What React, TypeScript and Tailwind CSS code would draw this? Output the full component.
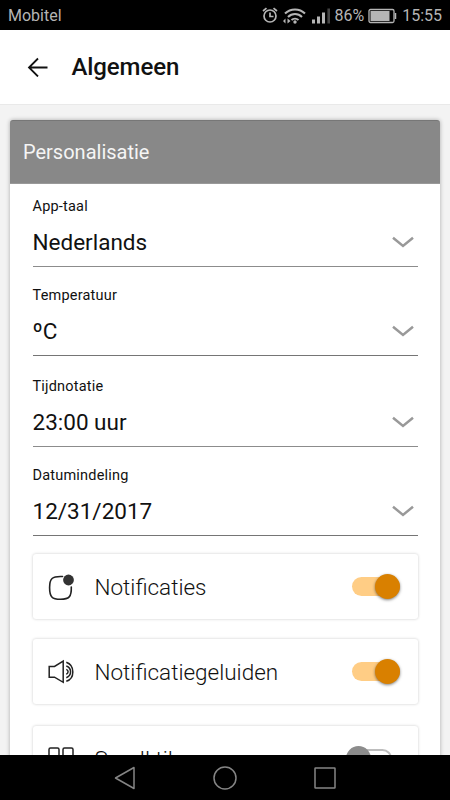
import React, { useState } from 'react';

interface Field {
  label: string;
  value: string;
  size: string;
}

const fields: Field[] = [
  { label: 'App-taal', value: 'Nederlands', size: 'h-[83px] border-[#8c8c8c]' },
  { label: 'Temperatuur', value: 'ºC', size: 'h-[89px] border-[#757575]' },
  { label: 'Tijdnotatie', value: '23:00 uur', size: 'h-[91px] border-[#8c8c8c]' },
  { label: 'Datumindeling', value: '12/31/2017', size: 'h-[89px] border-[#757575]' },
];

const NotificationIcon = () => (
  <svg width="28" height="28" viewBox="0 0 28 28" fill="none">
    <path d="M15.500 3.500C5 3 2.600 5.600 2.600 14.500C2.600 24 5 26.300 13.500 26.300C22 26.300 24.600 24 24.300 14" stroke="#222" strokeWidth="1.600" strokeLinecap="round" />
    <circle cx="21.500" cy="7" r="5.400" fill="#333" />
  </svg>
);

const SoundIcon = () => (
  <svg width="28" height="28" viewBox="0 0 28 28" fill="none" stroke="#222" strokeWidth="1.500">
    <path d="M2.200 8.500H7.500L16.200 3.200V24.300L7.500 19.200H2.200Z" />
    <path d="M19.300 4.300C28 7.500 28 20.500 19.300 23.300" />
    <path d="M19.300 8C25 10 25 17.700 19.300 19.700" />
    <path d="M19.300 11.400C21.700 12.400 21.700 15.200 19.300 16.200" />
  </svg>
);

const TilesIcon = () => (
  <svg width="28" height="28" viewBox="0 0 28 28" fill="none" stroke="#222" strokeWidth="1.500">
    <rect x="2" y="3" width="10" height="10" rx="1.500" />
    <rect x="16" y="3" width="10" height="10" rx="1.500" />
    <rect x="2" y="17" width="10" height="10" rx="1.500" />
    <rect x="16" y="17" width="10" height="10" rx="1.500" />
  </svg>
);

const Toggle: React.FC<{ on: boolean; onClick: () => void }> = ({ on, onClick }) => (
  <button
    onClick={onClick}
    className={`flex items-center h-[19px] rounded-full shrink-0 ${on ? 'w-12 bg-[#ffcd85] justify-end' : 'w-[46px] mr-2 bg-white border-2 border-[#bdbdbd] justify-start'}`}
  >
    <span className={`w-[25px] h-[25px] rounded-full shrink-0 ${on ? 'bg-[#d98000] shadow-[0_1px_3px_rgba(0,0,0,0.5)]' : 'bg-[#8c8c8c] -ml-0.5'}`} />
  </button>
);

const StatusBar = () => (
  <div className="h-[30px] shrink-0 bg-black flex items-center px-2 pt-px text-[16px] text-[#b5b5b5]">
    <span>Mobitel</span>
    <div className="ml-auto flex items-center">
      <svg width="68" height="20" viewBox="261 5 68 20" fill="none" stroke="#b5b5b5">
        {/* alarm */}
        <circle cx="269" cy="15" r="6" strokeWidth="1.700" />
        <path d="M262 10L265.500 7.100M276 10L272.500 7.100M269 11.500V15.500H272.500" strokeWidth="1.700" />
        {/* wifi */}
        <path d="M284 12.500C289.500 7 298.500 7 304 12.500M287 16C291 12 297 12 301 16M290.500 19C292.500 17.200 295.500 17.200 297.500 19" strokeWidth="2" />
        <circle cx="294" cy="21" r="1.700" fill="#b5b5b5" stroke="none" />
        <path d="M282 20L284.500 17.500V22.500ZM289.500 20L286.500 17.500V22.500Z" fill="#b5b5b5" stroke="none" />
        {/* signal */}
        <path d="M312.500 22.500V18.500M317.500 22.500V15.500M322.500 22.500V11.500" strokeWidth="3" />
        <path d="M327.700 22.500V7.500" stroke="#444" strokeWidth="2.600" />
      </svg>
      <span className="ml-1">86%</span>
      <svg className="ml-1" width="29" height="16" viewBox="0 0 29 16" fill="none">
        <rect x="1" y="1.500" width="25" height="13" rx="1.500" stroke="#b5b5b5" strokeWidth="1.300" />
        <rect x="2.500" y="3" width="19" height="10" fill="#b5b5b5" />
        <path d="M27.500 5V11" stroke="#b5b5b5" strokeWidth="1.500" />
      </svg>
      <span className="ml-[5px]">15:55</span>
    </div>
  </div>
);

const App: React.FC = () => {
  const [tiles, setTiles] = useState([
    { title: 'Notificaties', icon: <NotificationIcon />, on: true, gap: '' },
    { title: 'Notificatiegeluiden', icon: <SoundIcon />, on: true, gap: 'mt-5' },
    { title: 'Small tiles', icon: <TilesIcon />, on: false, gap: 'mt-[22px]' },
  ]);

  const toggle = (idx: number) =>
    setTiles(tiles.map((tile, i) => (i === idx ? { ...tile, on: !tile.on } : tile)));

  return (
    <div className="w-[450px] h-[800px] flex flex-col overflow-hidden bg-[#f3f3f3] text-[#111] font-['Roboto',sans-serif]">
      <StatusBar />

      <header className="h-[75px] shrink-0 bg-white border-b border-[#e9e9e9] flex items-center pl-[27px]">
        <svg width="21" height="20" viewBox="0 0 21 20" fill="none" stroke="#111" strokeWidth="1.800">
          <path d="M20.500 10.500H2M11 1.500L2 10.500L11 19.500" />
        </svg>
        <h1 className="ml-[23.5px] text-[24px] font-medium leading-none tracking-[-0.1px]">Algemeen</h1>
      </header>

      <main className="flex-1 min-h-0 overflow-hidden px-2.5 pt-[15px]">
        <section className="h-[720px] bg-white rounded-[3px] shadow-[0_0_4px_rgba(0,0,0,0.3)]">
          <h2 className="h-16 bg-[#888] border-y border-t-[#777] border-b-[#999] rounded-t-[3px] text-[#f5f5f5] text-[20px] flex items-center pl-[13px]">
            Personalisatie
          </h2>

          <div className="px-[22.5px]">
            {fields.map((field) => (
              <div key={field.label} className={`border-b flex flex-col justify-end pb-2.5 ${field.size}`}>
                <div className="text-[14.500px] leading-5 tracking-[0.2px]">{field.label}</div>
                <div className="mt-[11px] h-7 flex items-center justify-between">
                  <span className="text-[22.500px] leading-7">{field.value}</span>
                  <svg className="mr-1" width="22" height="12" viewBox="0 0 22 12" fill="none" stroke="#999" strokeWidth="2.500">
                    <path d="M1 1.700L11 10L21 1.700" />
                  </svg>
                </div>
              </div>
            ))}

            <div className="mt-[18px]">
              {tiles.map((tile, idx) => (
                <div key={tile.title} className={`h-[65px] rounded-[3px] shadow-[0_0_3px_rgba(0,0,0,0.22)] flex items-center pl-3.5 pr-[18px] ${tile.gap}`}>
                  {tile.icon}
                  <span className="ml-5 pt-0.5 flex-1 text-[22.500px] font-light">{tile.title}</span>
                  <Toggle on={tile.on} onClick={() => toggle(idx)} />
                </div>
              ))}
            </div>
          </div>
        </section>
      </main>

      <nav className="h-[45px] shrink-0 bg-black flex items-center justify-center">
        <svg width="222" height="26" viewBox="0 0 222 26" fill="none" stroke="#858585" strokeWidth="1.500" strokeLinejoin="round">
          <path d="M20 2.500V23.500L1.500 13Z" />
          <circle cx="111" cy="13" r="11" />
          <rect x="201" y="3" width="20" height="20" rx="0.500" />
        </svg>
      </nav>
    </div>
  );
};

export default App;
